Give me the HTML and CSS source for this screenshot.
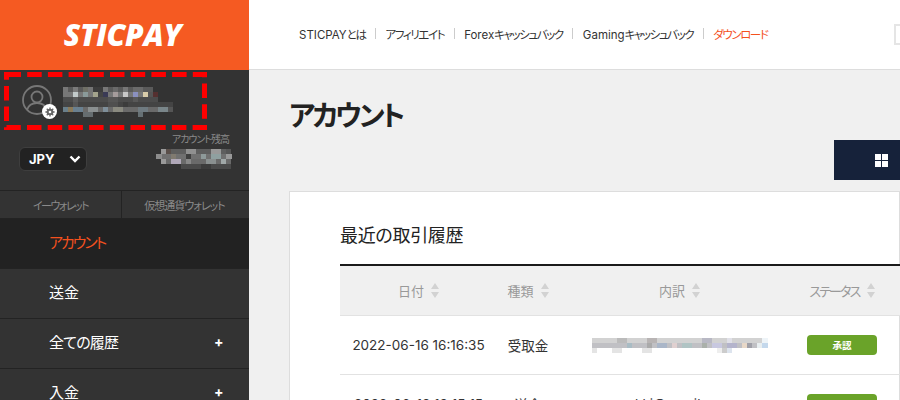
FILE: index.html
```html
<!DOCTYPE html>
<html lang="ja">
<head>
<meta charset="utf-8">
<title>STICPAY</title>
<link rel="stylesheet" href="styles.css">
</head>
<body>
<div class="app">
  <aside class="sidebar">
    <div class="logo">STICPAY</div>
    <div class="user">
      <span class="avatar">
        <svg width="34" height="34" viewBox="0 0 34 34" fill="none" stroke="#777" stroke-width="1.800"><circle cx="15" cy="15" r="14"/><circle cx="15" cy="12" r="5.500"/><path d="M5 25c1.500-5 5-7 10-7s8.500 2 10 7"/></svg>
        <span class="gear"><svg width="10" height="10" viewBox="0 0 12 12"><circle cx="6" cy="6" r="2.800" fill="none" stroke="#666" stroke-width="2.400"/><path d="M6 .5v2.500M6 9v2.500M.5 6H3M9 6h2.500M2.100 2.100l1.800 1.800M8.100 8.100l1.800 1.800M9.900 2.100L8.100 3.900M3.900 8.100l-1.800 1.800" stroke="#666" stroke-width="1.600"/></svg></span>
      </span>
      <svg class="mosaic-user" width="110" height="30" viewBox="0 0 110 30" shape-rendering="crispEdges">
        <rect x="0" y="0" width="90" height="5" fill="#5a5a5a"/>
        <rect x="0" y="0" width="5" height="5" fill="#777"/><rect x="10" y="0" width="5" height="5" fill="#7a7a7a"/><rect x="20" y="0" width="5" height="5" fill="#6f6f66"/><rect x="25" y="0" width="5" height="5" fill="#757575"/><rect x="30" y="0" width="10" height="5" fill="#3c3c3c"/><rect x="40" y="0" width="5" height="5" fill="#777"/><rect x="50" y="0" width="5" height="5" fill="#6a6a6a"/><rect x="60" y="0" width="5" height="5" fill="#777"/><rect x="70" y="0" width="10" height="5" fill="#6b6b6b"/>
        <rect x="0" y="5" width="95" height="5" fill="#777"/>
        <rect x="10" y="5" width="5" height="5" fill="#c2caca"/><rect x="20" y="5" width="5" height="5" fill="#8a9a9a"/><rect x="30" y="5" width="5" height="5" fill="#a3a38c"/><rect x="35" y="5" width="5" height="5" fill="#444"/><rect x="40" y="5" width="5" height="5" fill="#3a3a55"/><rect x="50" y="5" width="5" height="5" fill="#a59c9c"/><rect x="60" y="5" width="5" height="5" fill="#c8c8c8"/><rect x="70" y="5" width="5" height="5" fill="#8a90c0"/><rect x="80" y="5" width="5" height="5" fill="#d8ccaa"/><rect x="85" y="5" width="5" height="5" fill="#555"/><rect x="90" y="5" width="5" height="5" fill="#553030"/>
        <rect x="0" y="10" width="95" height="5" fill="#4c4c4c"/><rect x="10" y="10" width="5" height="5" fill="#5c5c5c"/><rect x="45" y="10" width="10" height="5" fill="#555"/><rect x="70" y="10" width="5" height="5" fill="#585858"/>
        <rect x="0" y="15" width="110" height="5" fill="#444"/><rect x="10" y="15" width="5" height="5" fill="#555"/><rect x="45" y="15" width="10" height="5" fill="#4f4f4f"/><rect x="60" y="15" width="5" height="5" fill="#3c3c3c"/>
        <rect x="0" y="20" width="110" height="5" fill="#6a6a6a"/><rect x="0" y="20" width="5" height="5" fill="#6a7f8a"/><rect x="5" y="20" width="5" height="5" fill="#8a7a5a"/><rect x="10" y="20" width="10" height="5" fill="#6a8090"/><rect x="25" y="20" width="10" height="5" fill="#8a8f90"/><rect x="40" y="20" width="5" height="5" fill="#7f8f9a"/><rect x="50" y="20" width="10" height="5" fill="#8a8a80"/><rect x="75" y="20" width="10" height="5" fill="#6f7a80"/><rect x="95" y="20" width="10" height="5" fill="#7a868a"/><rect x="105" y="20" width="5" height="5" fill="#555"/>
        <rect x="20" y="25" width="10" height="5" fill="#666d70"/><rect x="75" y="25" width="5" height="5" fill="#667074"/>
      </svg>
    </div>
    <div class="wallet">
      <div class="currency"><span>JPY</span><svg width="12" height="8" viewBox="0 0 12 8" fill="none" stroke="#fff" stroke-width="2.400"><path d="M1.500 1.500L6 6l4.500-4.500"/></svg></div>
      <div class="balance">
        <span class="balance-label">アカウント残高</span>
        <svg width="76" height="20" viewBox="0 0 76 20" shape-rendering="crispEdges">
          <rect x="5" y="0" width="70" height="5" fill="#5e5e5e"/><rect x="0" y="5" width="76" height="5" fill="#707070"/><rect x="5" y="10" width="70" height="5" fill="#6a6a6a"/><rect x="5" y="15" width="70" height="5" fill="#4a4a4a"/>
          <rect x="5" y="0" width="5" height="5" fill="#999"/><rect x="10" y="0" width="5" height="5" fill="#5a4f4a"/><rect x="30" y="0" width="10" height="5" fill="#909090"/><rect x="55" y="0" width="10" height="5" fill="#999"/><rect x="70" y="0" width="5" height="5" fill="#555"/>
          <rect x="0" y="5" width="6" height="5" fill="#8c8c8c"/><rect x="15" y="5" width="5" height="5" fill="#807a70"/><rect x="30" y="5" width="5" height="5" fill="#3f3f3f"/><rect x="45" y="5" width="5" height="5" fill="#8e9a9a"/><rect x="55" y="5" width="10" height="5" fill="#8fa0a0"/><rect x="70" y="5" width="6" height="5" fill="#999"/>
          <rect x="5" y="10" width="5" height="5" fill="#9a9a9a"/><rect x="15" y="10" width="10" height="5" fill="#b0a8b8"/><rect x="30" y="10" width="5" height="5" fill="#888"/><rect x="50" y="10" width="10" height="5" fill="#8a9090"/><rect x="65" y="10" width="5" height="5" fill="#a0a8a8"/>
          <rect x="5" y="15" width="20" height="5" fill="#333"/><rect x="45" y="15" width="10" height="5" fill="#3c3c3c"/>
        </svg>
      </div>
    </div>
    <div class="tabs">
      <div class="tab tab-first">イーウォレット</div>
      <div class="tab tab-second">仮想通貨ウォレット</div>
    </div>
    <nav class="menu">
      <div class="menu-item active">アカウント</div>
      <div class="menu-item">送金</div>
      <div class="menu-item"><span class="history">全ての履歴</span><span class="plus">+</span></div>
      <div class="menu-item">入金<span class="plus">+</span></div>
    </nav>
  </aside>
  <div class="content">
    <header class="topbar">
      <nav class="topnav">
        <a>STICPAY<span class="kana">とは</span></a><i></i><a class="kana">アフィリエイト</a><i></i><a>Forex<span class="kana">キャッシュバック</span></a><i></i><a>Gaming<span class="kana">キャッシュバック</span></a><i></i><a class="kana orange">ダウンロード</a>
      </nav>
      <div class="search"></div>
    </header>
    <main class="main">
      <h1 class="title">アカウント</h1>
      <div class="toolbar">
        <div class="view-btn"><svg width="13" height="13" viewBox="0 0 13 13" fill="#fff" shape-rendering="crispEdges"><rect width="6" height="6"/><rect x="7" width="6" height="6"/><rect y="7" width="6" height="6"/><rect x="7" y="7" width="6" height="6"/></svg></div>
      </div>
      <section class="card">
        <h2 class="card-title">最近の取引履歴</h2>
        <div class="table">
          <div class="row head">
            <div class="cell c-date">日付<svg class="sort" width="8" height="15" viewBox="0 0 8 15" fill="#d2d2d2"><path d="M4 0l4 6H0zM0 9h8l-4 6z"/></svg></div>
            <div class="cell c-type">種類<svg class="sort" width="8" height="15" viewBox="0 0 8 15" fill="#d2d2d2"><path d="M4 0l4 6H0zM0 9h8l-4 6z"/></svg></div>
            <div class="cell c-detail">内訳<svg class="sort" width="8" height="15" viewBox="0 0 8 15" fill="#d2d2d2"><path d="M4 0l4 6H0zM0 9h8l-4 6z"/></svg></div>
            <div class="cell c-status"><span class="status-label">ステータス</span><svg class="sort" width="8" height="15" viewBox="0 0 8 15" fill="#d2d2d2"><path d="M4 0l4 6H0zM0 9h8l-4 6z"/></svg></div>
          </div>
          <div class="row body">
            <div class="cell c-date">2022-06-16 16:16:35</div>
            <div class="cell c-type">受取金</div>
            <div class="cell c-detail">
              <svg width="176" height="15" viewBox="0 0 176 15" shape-rendering="crispEdges">
                <rect x="0" y="0" width="175" height="5" fill="#d2d2d2"/><rect x="0" y="5" width="176" height="5" fill="#c0c0c4"/>
                <rect x="25" y="0" width="10" height="5" fill="#bbb"/><rect x="55" y="0" width="10" height="5" fill="#b8b4b4"/><rect x="110" y="0" width="10" height="5" fill="#b8b8c4"/><rect x="135" y="0" width="5" height="5" fill="#e0e0e8"/><rect x="170" y="0" width="6" height="5" fill="#eef4f8"/>
                <rect x="35" y="5" width="5" height="5" fill="#a9bcc4"/><rect x="55" y="5" width="5" height="5" fill="#aaa"/><rect x="65" y="5" width="10" height="5" fill="#aab6c8"/><rect x="80" y="5" width="5" height="5" fill="#e0d0d0"/><rect x="90" y="5" width="10" height="5" fill="#b0c4c4"/><rect x="110" y="5" width="5" height="5" fill="#aab0aa"/><rect x="120" y="5" width="10" height="5" fill="#c8c8e0"/><rect x="135" y="5" width="10" height="5" fill="#b4b4cc"/><rect x="150" y="5" width="5" height="5" fill="#e8d8c8"/><rect x="155" y="5" width="5" height="5" fill="#a0a0a8"/><rect x="165" y="5" width="5" height="5" fill="#e8eef0"/><rect x="170" y="5" width="6" height="5" fill="#c4d8ec"/>
                <rect x="0" y="10" width="5" height="5" fill="#e4e4e4"/><rect x="20" y="10" width="10" height="5" fill="#e4e4e4"/><rect x="50" y="10" width="10" height="5" fill="#e4e4e4"/><rect x="125" y="10" width="5" height="5" fill="#eee"/><rect x="130" y="10" width="5" height="5" fill="#ccc"/><rect x="135" y="10" width="5" height="5" fill="#dde4ee"/>
              </svg>
            </div>
            <div class="cell c-status"><span class="badge">承認</span></div>
          </div>
          <div class="row body">
            <div class="cell c-date">2022-06-13 13:15:15</div>
            <div class="cell c-type">送金</div>
            <div class="cell c-detail">ukki@gmail.com</div>
            <div class="cell c-status"><span class="badge">承認</span></div>
          </div>
        </div>
      </section>
    </main>
  </div>
  <svg class="highlight" width="203" height="58" viewBox="0 0 203 58" fill="none"><rect x="2.500" y="2.500" width="198" height="53" stroke="#f00" stroke-width="5" stroke-dasharray="14.500 6.200"/></svg>
</div>
</body>
</html>
```
FILE: styles.css
```css
* { box-sizing: border-box; }
html, body { margin: 0; padding: 0; height: 100%; overflow: hidden; }
body { font-family: "Noto Sans CJK JP", "Noto Sans", sans-serif; font-feature-settings: "palt"; background: #f0f0f0; }
.app { position: relative; display: flex; width: 900px; height: 400px; overflow: hidden; }

.sidebar { width: 249px; flex: none; background: #333; }
.logo { height: 70px; padding-right: 4px; background: #f55a22; color: #fff; display: flex; align-items: center; justify-content: center; font: italic 800 30px/1 "Open Sans", sans-serif; letter-spacing: -0.3px; }
.user { height: 60px; padding: 15px 0 0 22px; display: flex; align-items: flex-start; gap: 7px; }
.avatar { position: relative; width: 34px; height: 34px; flex: none; }
.avatar > svg { display: block; }
.gear { position: absolute; right: -1px; bottom: 0; width: 15px; height: 15px; background: #fff; border-radius: 50%; display: flex; align-items: center; justify-content: center; }
.mosaic-user { margin-top: 2px; }
.wallet { height: 60px; display: flex; justify-content: space-between; padding: 0 17px 0 19px; }
.currency { width: 68px; height: 24px; margin-top: 17px; background: #222; border: 1px solid #3e3e3e; border-radius: 6px; color: #fff; font: 700 13px/22px "Inter", sans-serif; display: flex; justify-content: space-between; align-items: center; padding: 0 5px 0 9px; }
.balance { display: flex; flex-direction: column; align-items: flex-end; gap: 3px; padding-top: 1px; }
.balance-label { font-size: 10px; line-height: 15px; color: #8a8a8a; margin-right: 3px; letter-spacing: -1px; }
.tabs { height: 29px; display: flex; border-top: 1px solid #232323; border-bottom: 1px solid #232323; }
.tab { font-size: 11px; color: #8a8a8a; display: flex; align-items: center; justify-content: center; }
.tab-first { width: 122px; border-right: 1px solid #232323; letter-spacing: -1.500px; }
.tab-second { flex: 1; letter-spacing: -1px; padding-right: 2px; }
.menu-item { height: 50px; padding: 0 0 4px 49px; display: flex; align-items: center; justify-content: space-between; color: #fff; font-size: 15px; border-bottom: 1px solid #232323; }
.menu-item.active { background: #222; color: #f4511e; letter-spacing: -2px; }
.history { letter-spacing: -0.800px; }
.plus { width: 35px; font: 700 14px/1 "Inter", sans-serif; }

.content { flex: 1; min-width: 0; display: flex; flex-direction: column; }
.topbar { height: 70px; flex: none; background: #fff; border-bottom: 1px solid #ddd; display: flex; align-items: center; justify-content: space-between; padding: 0 0 0 50px; }
.topnav { display: flex; align-items: center; padding-bottom: 2px; font-size: 11.500px; color: #333; font-family: "Inter", "Noto Sans CJK JP", sans-serif; }
.topnav i { width: 1px; height: 11px; background: #ccc; margin: 0 9.500px; }
.kana { letter-spacing: -1.400px; }
.orange { color: #f4511e; }
.search { width: 6px; height: 21px; border: 2px solid #e5e5e5; border-right: 0; margin-top: -1px; }

.main { flex: 1; min-height: 0; padding: 24px 0 0 40px; }
.title { margin: 0; font-size: 28px; font-weight: 700; line-height: 40px; color: #222; letter-spacing: -2.800px; }
.toolbar { display: flex; justify-content: flex-end; margin-top: 6px; height: 40px; }
.view-btn { width: 66px; height: 40px; background: #16223a; display: flex; align-items: center; padding-left: 41px; }
.card { margin-top: 11px; background: #fff; border: 1px solid #ddd; padding: 29px 0 0 50px; height: 300px; }
.card-title { margin: 0; height: 43px; font-size: 18px; font-weight: 400; line-height: 26px; color: #222; letter-spacing: -0.300px; }
.table { border-top: 2px solid #1a1a1a; width: 620px; }
.row { display: flex; align-items: center; border-bottom: 1px solid #e2e2e2; }
.row.head { height: 50px; background: #f0f0f0; color: #999; font-size: 13px; }
.row.body { height: 59px; color: #333; font-size: 13.500px; font-family: "Inter", "Noto Sans CJK JP", sans-serif; }
.cell { display: flex; align-items: center; justify-content: center; gap: 7px; flex: none; }
.c-date { width: 157px; }
.c-type { width: 62px; }
.c-detail { width: 241px; }
.c-status { width: 84px; }
.status-label { letter-spacing: -1.800px; }
.sort { flex: none; }
.badge { width: 70px; height: 20px; flex: none; background: #6aa329; color: #fff; border-radius: 4px; font: 700 9.500px/20px "Noto Sans CJK JP", sans-serif; text-align: center; }

.highlight { position: absolute; left: 4px; top: 72px; }
```
